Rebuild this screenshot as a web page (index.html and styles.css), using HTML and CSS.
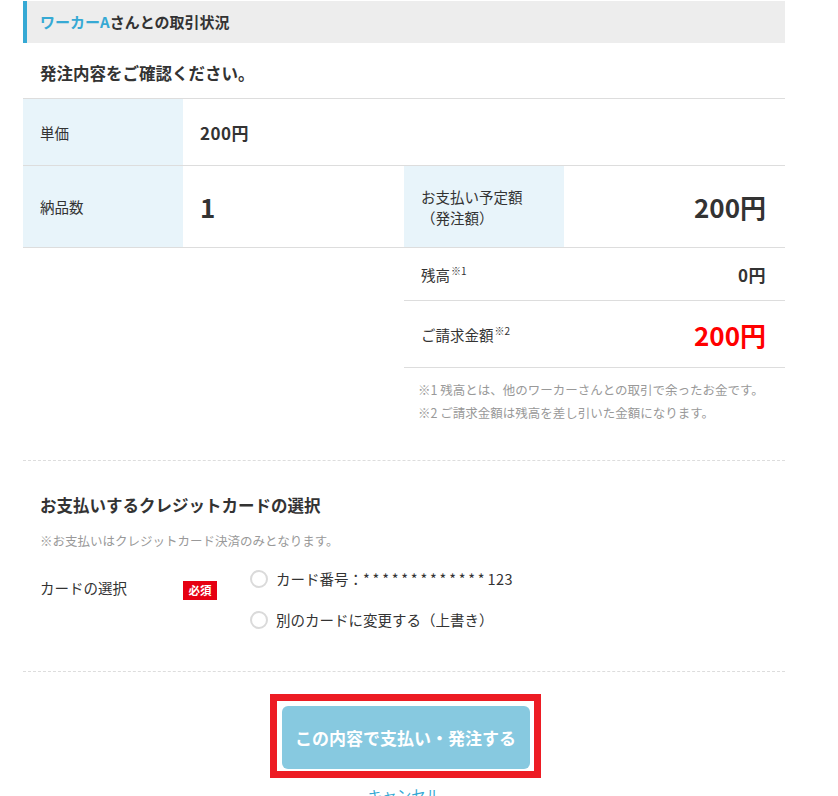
FILE: index.html
```html
<!DOCTYPE html>
<html lang="ja">
<head>
<meta charset="utf-8">
<title>ワーカーAさんとの取引状況</title>
<link rel="stylesheet" href="styles.css">
</head>
<body>
<div class="page">
  <h2 class="section-head"><span class="accent">ワーカーA</span>さんとの取引状況</h2>
  <p class="lead">発注内容をご確認ください。</p>

  <div class="order-table">
    <div class="row row-unit">
      <div class="cell-label">単価</div>
      <div class="cell-value mid">200円</div>
    </div>
    <div class="row row-qty">
      <div class="half">
        <div class="cell-label">納品数</div>
        <div class="cell-value big">1</div>
      </div>
      <div class="half">
        <div class="cell-label">お支払い予定額<br>（発注額）</div>
        <div class="cell-value big right">200円</div>
      </div>
    </div>
  </div>

  <div class="summary">
    <div class="sum-row sum-balance">
      <div class="sum-label">残高<sup>※1</sup></div>
      <div class="sum-value mid">0円</div>
    </div>
    <div class="sum-row sum-bill">
      <div class="sum-label">ご請求金額<sup>※2</sup></div>
      <div class="sum-value big red">200円</div>
    </div>
    <div class="notes">
      <p>※1 残高とは、他のワーカーさんとの取引で余ったお金です。</p>
      <p>※2 ご請求金額は残高を差し引いた金額になります。</p>
    </div>
  </div>

  <div class="card-section">
    <h3 class="card-title">お支払いするクレジットカードの選択</h3>
    <p class="card-note">※お支払いはクレジットカード決済のみとなります。</p>
    <div class="card-row">
      <div class="card-label">カードの選択</div>
      <span class="badge">必須</span>
      <div class="radios">
        <label class="radio"><span class="circle"></span>カード番号：<span class="stars">*************</span><span class="digits">123</span></label>
        <label class="radio"><span class="circle"></span>別のカードに変更する（上書き）</label>
      </div>
    </div>
  </div>

  <div class="actions">
    <div class="highlight">
      <button class="submit">この内容で支払い・発注する</button>
    </div>
    <a class="cancel" href="#">キャンセル</a>
  </div>
</div>
</body>
</html>
```

FILE: styles.css
```css
* { box-sizing: border-box; }
html, body { margin: 0; padding: 0; background: #fff; }
body {
  font-family: "Noto Sans CJK JP", "Noto Sans", sans-serif;
  color: #333;
  font-size: 14.5px;
}
p, h2, h3 { margin: 0; }

.page {
  width: 762px;
  margin-left: 23px;
  padding-top: 1px;
}

.section-head {
  height: 42px;
  line-height: 42px;
  background: #ededed;
  border-left: 4px solid #36a9d4;
  padding-left: 13px;
  font-size: 15px;
  font-weight: 700;
  color: #333;
}
.section-head .accent { color: #36a9d4; }

.lead {
  height: 55px;
  padding: 18px 0 0 17px;
  font-size: 16.5px;
  line-height: 24px;
  font-weight: 700;
}

.order-table { border-top: 1px solid #ddd; }
.row {
  display: flex;
  border-bottom: 1px solid #ddd;
}
.row-unit { height: 67px; }
.row-qty { height: 82px; }
.half {
  display: flex;
  width: 381px;
}
.cell-label {
  width: 160px;
  flex: none;
  background: #e8f4fa;
  padding-left: 17px;
  display: flex;
  align-items: center;
  line-height: 21px;
}
.cell-value {
  flex: 1;
  display: flex;
  align-items: center;
  padding-left: 17px;
  font-weight: 700;
}
.cell-value.right {
  justify-content: flex-end;
  padding: 0 19px 0 0;
}
.mid { font-size: 17px; letter-spacing: 0.5px; }
.big { font-size: 26px; }
.red { color: #ff0000; }

.summary {
  margin-left: 381px;
  width: 381px;
}
.sum-row {
  display: flex;
  align-items: center;
  justify-content: space-between;
  border-bottom: 1px solid #ddd;
  padding: 0 19px 0 17px;
}
.sum-balance { height: 53px; }
.sum-bill { height: 67px; }
.sum-label sup {
  font-size: 10px;
  vertical-align: 0.6em;
  line-height: 0;
  margin-left: 1px;
}
.sum-value { font-weight: 700; }

.notes {
  padding: 10px 0 0 14px;
  margin-bottom: 36px;
  font-size: 12.5px;
  line-height: 23px;
  color: #999;
}

.card-section {
  border-top: 1px dashed #ddd;
  border-bottom: 1px dashed #ddd;
  padding: 32px 0 40px 17px;
}
.card-title {
  font-size: 16.5px;
  line-height: 24px;
  font-weight: 700;
}
.card-note {
  margin-top: 14px;
  font-size: 12.5px;
  line-height: 20px;
  color: #999;
}
.card-row {
  display: flex;
  align-items: flex-start;
  margin-top: 17px;
}
.card-label {
  width: 143px;
  margin-top: 10px;
  line-height: 20px;
}
.badge {
  margin-top: 13px;
  width: 34px;
  height: 19px;
  background: #e60012;
  color: #fff;
  font-size: 11.5px;
  font-weight: 700;
  line-height: 19px;
  text-align: center;
}
.radios {
  margin-left: 33px;
  display: flex;
  flex-direction: column;
  gap: 19px;
}
.radio {
  display: flex;
  align-items: center;
  height: 22px;
  line-height: 22px;
}
.stars { letter-spacing: 2.8px; }
.digits { letter-spacing: 0.5px; }
.circle {
  width: 18px;
  height: 18px;
  border: 2px solid #dadada;
  border-radius: 50%;
  background: #fff;
  margin-right: 8px;
  flex: none;
}

.actions {
  display: flex;
  flex-direction: column;
  align-items: center;
  padding-top: 22px;
}
.highlight {
  border: 7px solid #ed1c24;
  padding: 5px 4px 2px 5px;
  margin-left: 2px;
}
.submit {
  display: block;
  width: 248px;
  height: 63px;
  border: none;
  border-radius: 6px;
  background: #87c9e0;
  color: #fff;
  font-family: inherit;
  font-size: 17px;
  font-weight: 700;
}
.cancel {
  margin-top: 6px;
  color: #36a9d4;
  text-decoration: none;
  font-size: 14.5px;
  line-height: 22px;
}
```
